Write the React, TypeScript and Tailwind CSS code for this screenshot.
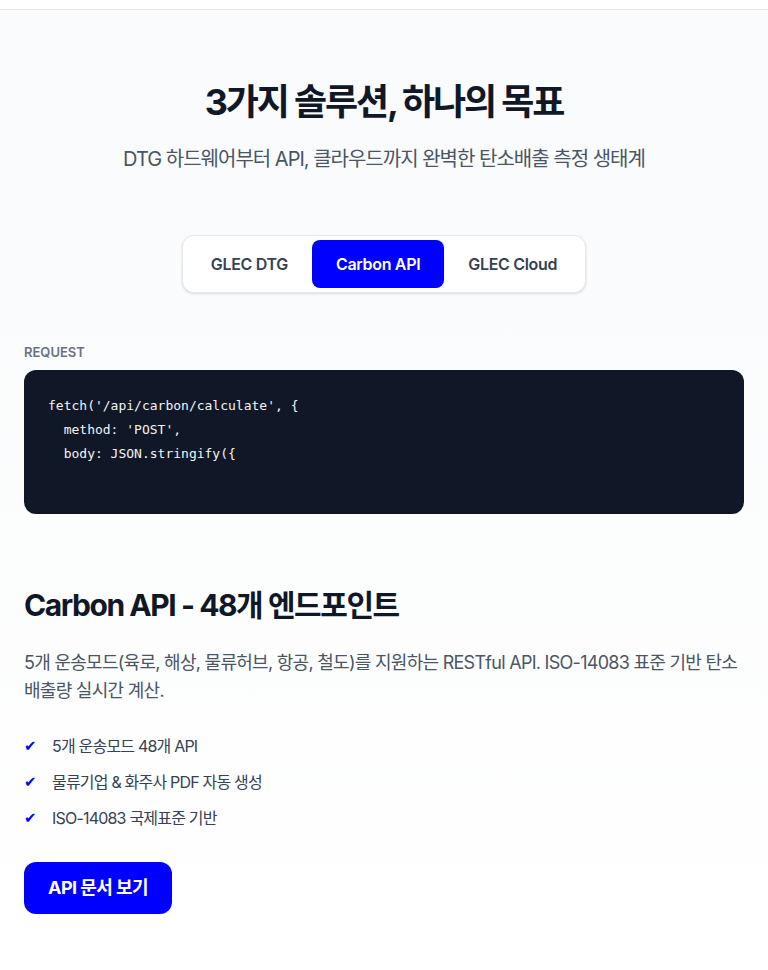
import React, { useState } from 'react';

const tabs = ['GLEC DTG', 'Carbon API', 'GLEC Cloud'];

const features = ['5개 운송모드 48개 API', '물류기업 & 화주사 PDF 자동 생성', 'ISO-14083 국제표준 기반'];

const codeLines = ["fetch('/api/carbon/calculate', {", "  method: 'POST',", '  body: JSON.stringify({', ''];

export default function App() {
  const [active, setActive] = useState(1);

  return (
    <div
      className="min-h-screen bg-gradient-to-b from-gray-50 to-white"
      style={{ fontFamily: 'Inter, "Noto Sans CJK KR", sans-serif' }}
    >
      <div className="h-[10px] bg-white border-b border-gray-200" />

      <section className="px-6 pt-[72px] pb-16">
        <div className="text-center">
          <h2 className="text-4xl font-bold text-gray-900 tracking-[-0.06em]">3가지 솔루션, 하나의 목표</h2>
          <p className="mt-[23px] text-xl leading-7 text-gray-600 tracking-[-0.05em]">
            DTG 하드웨어부터 API, 클라우드까지 완벽한 탄소배출 측정 생태계
          </p>
        </div>

        <div className="mt-[62px] flex justify-center">
          <div className="flex p-1 bg-white border border-gray-200 rounded-xl shadow-sm">
            {tabs.map((t, i) => (
              <button
                key={t}
                onClick={() => setActive(i)}
                className={`px-6 py-3 rounded-lg text-base font-semibold tracking-[-0.02em] ${
                  i === active ? 'bg-[#0000ff] text-white' : 'text-gray-700'
                }`}
              >
                {t}
              </button>
            ))}
          </div>
        </div>

        <div className="mt-[49px]">
          <div className="mb-2 text-[13px] leading-5 font-semibold text-gray-500 uppercase">Request</div>
          <pre
            className="p-6 bg-gray-900 rounded-xl text-[13px] leading-6 text-gray-100"
            style={{ fontFamily: '"DejaVu Sans Mono", monospace' }}
          >
            {codeLines.map((l, i) => (
              <div key={i} className="h-6">{l}</div>
            ))}
          </pre>
        </div>

        <div className="mt-[73px]">
          <h3 className="text-3xl font-bold text-gray-900 tracking-[-0.048em]">Carbon API - 48개 엔드포인트</h3>
          <p className="mt-[26px] text-lg leading-7 text-gray-600 tracking-[-0.04em]">
            5개 운송모드(육로, 해상, 물류허브, 항공, 철도)를 지원하는 RESTful API. ISO-14083 표준 기반 탄소배출량 실시간 계산.
          </p>
          <ul className="mt-[29px] space-y-3">
            {features.map((f) => (
              <li key={f} className="flex items-center gap-3 text-base leading-6 text-gray-700 tracking-[-0.05em]">
                <span className="w-4 text-[15px] text-[#0000ff]" style={{ fontFamily: '"DejaVu Sans", sans-serif' }}>✔</span>
                {f}
              </li>
            ))}
          </ul>
          <button className="mt-8 px-6 py-3 bg-[#0000ff] text-white text-lg font-bold rounded-xl tracking-[-0.03em]">
            API 문서 보기
          </button>
        </div>
      </section>
    </div>
  );
}
